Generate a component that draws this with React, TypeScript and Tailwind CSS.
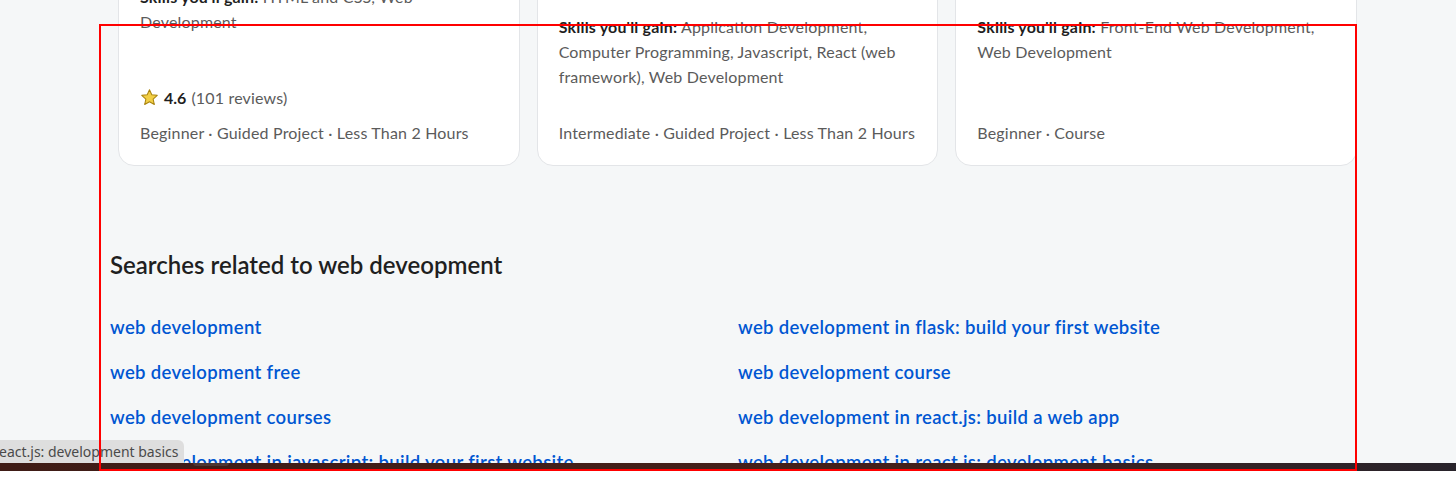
import React from 'react';

interface Card {
  id: number;
  skills: string;
  rating?: { value: string; reviews: string };
  meta: string;
  topPad: string;
}

const cards: Card[] = [
  {
    id: 1,
    skills: 'HTML and CSS, Web Development',
    rating: { value: '4.6', reviews: '(101 reviews)' },
    meta: 'Beginner · Guided Project · Less Than 2 Hours',
    topPad: 'pt-[23px]',
  },
  {
    id: 2,
    skills: 'Application Development, Computer Programming, Javascript, React (web framework), Web Development',
    meta: 'Intermediate · Guided Project · Less Than 2 Hours',
    topPad: 'pt-[53px]',
  },
  {
    id: 3,
    skills: 'Front-End Web Development, Web Development',
    meta: 'Beginner · Course',
    topPad: 'pt-[53px]',
  },
];

const related = [
  'web development',
  'web development in flask: build your first website',
  'web development free',
  'web development course',
  'web development courses',
  'web development in react.js: build a web app',
  'web development in javascript: build your first website',
  'web development in react.js: development basics',
];

function Star() {
  return (
    <svg width="19" height="19" viewBox="0 0 24 24" className="mr-[5px] shrink-0">
      <path
        d="M12 2.2l2.9 6.4 6.9.7-5.2 4.7 1.5 6.9L12 17.3l-6.1 3.6 1.5-6.9-5.2-4.7 6.9-.7z"
        fill="#f2cf45"
        stroke="#a98410"
        strokeWidth="1.3"
        strokeLinejoin="round"
      />
    </svg>
  );
}

export default function App() {
  return (
    <div
      className="relative w-[1456px] h-[497px] overflow-hidden bg-white flex flex-col"
      style={{ fontFamily: 'Lato, "Noto Sans", sans-serif' }}
    >
      <div className="h-[463px] shrink-0 overflow-hidden bg-[#f5f7f8] pl-[110px]">
        <div className="w-[1256px]">
          {/* course cards, scrolled partly out of view */}
          <div className="ml-[8px] w-[1239px] -mt-[40px] grid grid-cols-3 gap-[17px] h-[206px]">
            {cards.map((c) => (
              <div
                key={c.id}
                className={`bg-white border border-[#e3e5e8] rounded-2xl px-[21px] pb-[20px] flex flex-col ${c.topPad}`}
              >
                <p className="text-base leading-[25px] tracking-[0.18px] text-[#5b5b5b]">
                  <strong className="font-bold text-[#1f1f1f]">Skills you'll gain:</strong> {c.skills}
                </p>
                <div className="mt-auto">
                  {c.rating && (
                    <div className="flex items-center text-base leading-[25px] mb-[10px]">
                      <Star />
                      <span className="font-bold text-[#1f1f1f] mr-[5px]">{c.rating.value}</span>
                      <span className="text-[#5b5b5b] tracking-[0.18px]">{c.rating.reviews}</span>
                    </div>
                  )}
                  <div className="text-base leading-[25px] tracking-[0.18px] text-[#5b5b5b]">{c.meta}</div>
                </div>
              </div>
            ))}
          </div>

          {/* related searches */}
          <h2 className="mt-[83px] text-2xl leading-8 font-semibold text-[#1f1f1f]">
            Searches related to web deveopment
          </h2>
          <div className="mt-[33px] grid grid-cols-2 gap-y-[18px]">
            {related.map((r) => (
              <a
                key={r}
                href="#"
                className="text-[18.5px] leading-[27px] tracking-[0.35px] font-semibold text-[#0056d2]"
              >
                {r}
              </a>
            ))}
          </div>
        </div>
      </div>

      {/* bottom window strip */}
      <div className="relative h-[8px] shrink-0 bg-[linear-gradient(to_right,#3f1c16,#45201a_60%,#28232b)]">
        <div className="absolute left-[193px] top-0 w-[36px] h-[3px] rounded-b bg-[#4e3632]" />
      </div>
      <div className="flex-1 bg-white" />

      {/* link hover tooltip */}
      <div
        className="absolute left-0 top-[440px] h-[23px] w-[184px] bg-[#dedede] rounded-tr-md text-[14px] leading-[23px] text-[#4a4a4a] overflow-hidden whitespace-nowrap"
        style={{ fontFamily: '"Noto Sans", sans-serif' }}
      >
        <span className="-ml-[1px]">eact.js: development basics</span>
      </div>

      {/* red annotation frame */}
      <div className="absolute left-[99px] top-[24px] w-[1258px] h-[447px] border-2 border-[#ff0000] pointer-events-none" />
    </div>
  );
}
